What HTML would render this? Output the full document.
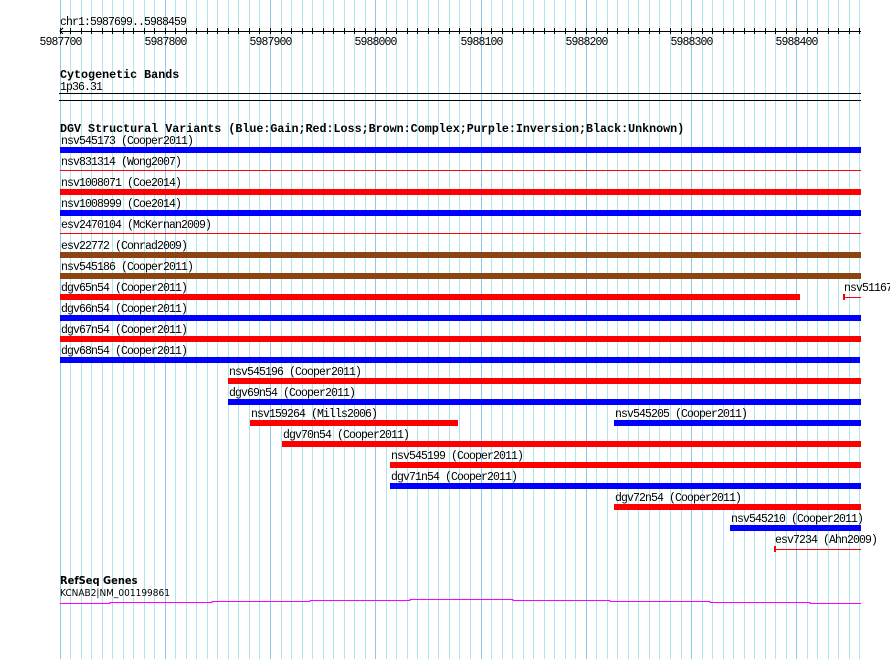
<!DOCTYPE html>
<html><head><meta charset="utf-8"><style>
html,body{margin:0;padding:0;background:#fff;width:890px;height:659px;overflow:hidden}
svg{display:block}
text{font-family:"Liberation Mono",monospace;font-size:11.5px;letter-spacing:-0.9px;fill:#000}
.b{font-weight:bold;font-size:11.7px;letter-spacing:0}
</style></head><body>
<svg id="s" width="890" height="659" viewBox="0 0 890 659" shape-rendering="crispEdges">
<g id="grid"></g>
<g id="ruler"></g>
<text x="60" y="25">chr1:5987699..5988459</text>
<text class="b" x="60" y="78">Cytogenetic Bands</text>
<text x="60" y="90">1p36.31</text>
<rect x="59" y="93" width="802" height="1" fill="#000"/>
<rect x="59" y="100" width="802" height="1" fill="#000"/>
<text class="b" x="60" y="132">DGV Structural Variants (Blue:Gain;Red:Loss;Brown:Complex;Purple:Inversion;Black:Unknown)</text>
<g id="rows"></g>
<text x="60" y="584" style="font-family:'DejaVu Sans Condensed','Liberation Sans',sans-serif;font-size:11px;font-weight:bold;letter-spacing:0">RefSeq Genes</text>
<text x="60" y="596" style="font-family:'DejaVu Sans Condensed','Liberation Sans',sans-serif;font-size:10px;letter-spacing:0">KCNAB2|NM_001199861</text>
<polyline fill="none" stroke="#ff00ff" stroke-width="1" points="60,603.5 110,603.5 110,602.5 212,602.5 212,601.5 310,601.5 310,600.5 410,600.5 410,599.5 513,599.5 513,600.5 610,600.5 610,601.5 710,601.5 710,602.5 810,602.5 810,603.5 861,603.5"/>
</svg>
<script>
var NS="http://www.w3.org/2000/svg";
function el(p,t,a,txt){var e=document.createElementNS(NS,t);for(var k in a)e.setAttribute(k,a[k]);if(txt)e.textContent=txt;document.getElementById(p).appendChild(e);return e;}
function X(pos){return 60.5+(pos-5987700)*1.0526;}
for(var k=0;k<=76;k++){var x=Math.round(X(5987700+k*10))-0.5;var maj=k%10==0;
 el("grid","line",{x1:x,y1:0,x2:x,y2:659,stroke:maj?"#8cc8e8":"#aee8ee","stroke-width":1});
 el("ruler","line",{x1:x,y1:28,x2:x,y2:34,stroke:"#000"});
 if(maj) el("ruler","text",{x:x,y:45,"text-anchor":"middle"},String(5987700+k*10));
}
el("ruler","rect",{x:60,y:31,width:801,height:1,fill:"#000"});
el("ruler","polyline",{points:"63,28 60,31 63,34",fill:"none",stroke:"#000"});
var B="#0000ff",R="#ff0000",N="#8b4513";
var rows=[
[0,"nsv545173 (Cooper2011)",60,861,B,0],
[1,"nsv831314 (Wong2007)",60,861,R,1],
[2,"nsv1008071 (Coe2014)",60,861,R,0],
[3,"nsv1008999 (Coe2014)",60,861,B,0],
[4,"esv2470104 (McKernan2009)",60,861,R,1],
[5,"esv22772 (Conrad2009)",60,861,N,0],
[6,"nsv545186 (Cooper2011)",60,861,N,0],
[7,"dgv65n54 (Cooper2011)",60,800,R,0],
[7,"nsv51167",843,861,R,2],
[8,"dgv66n54 (Cooper2011)",60,861,B,0],
[9,"dgv67n54 (Cooper2011)",60,861,R,0],
[10,"dgv68n54 (Cooper2011)",60,860,B,0],
[11,"nsv545196 (Cooper2011)",228,861,R,0],
[12,"dgv69n54 (Cooper2011)",228,861,B,0],
[13,"nsv159264 (Mills2006)",250,458,R,0],
[13,"nsv545205 (Cooper2011)",614,861,B,0],
[14,"dgv70n54 (Cooper2011)",282,861,R,0],
[15,"nsv545199 (Cooper2011)",390,861,R,0],
[16,"dgv71n54 (Cooper2011)",390,861,B,0],
[17,"dgv72n54 (Cooper2011)",614,861,R,0],
[18,"nsv545210 (Cooper2011)",730,861,B,0],
[19,"esv7234 (Ahn2009)",774,861,R,2]
];
rows.forEach(function(r){var y=147+r[0]*21;
 el("rows","text",{x:r[2]+1,y:y-3},r[1]);
 if(r[5]==0) el("rows","rect",{x:r[2],y:y,width:r[3]-r[2],height:6,fill:r[4]});
 else if(r[5]==1) el("rows","rect",{x:r[2],y:y+2,width:r[3]-r[2],height:1,fill:r[4]});
 else {el("rows","rect",{x:r[2],y:y+3,width:r[3]-r[2],height:1,fill:r[4]});el("rows","rect",{x:r[2],y:y,width:2,height:6,fill:r[4]});}
});
</script>
</body></html>
